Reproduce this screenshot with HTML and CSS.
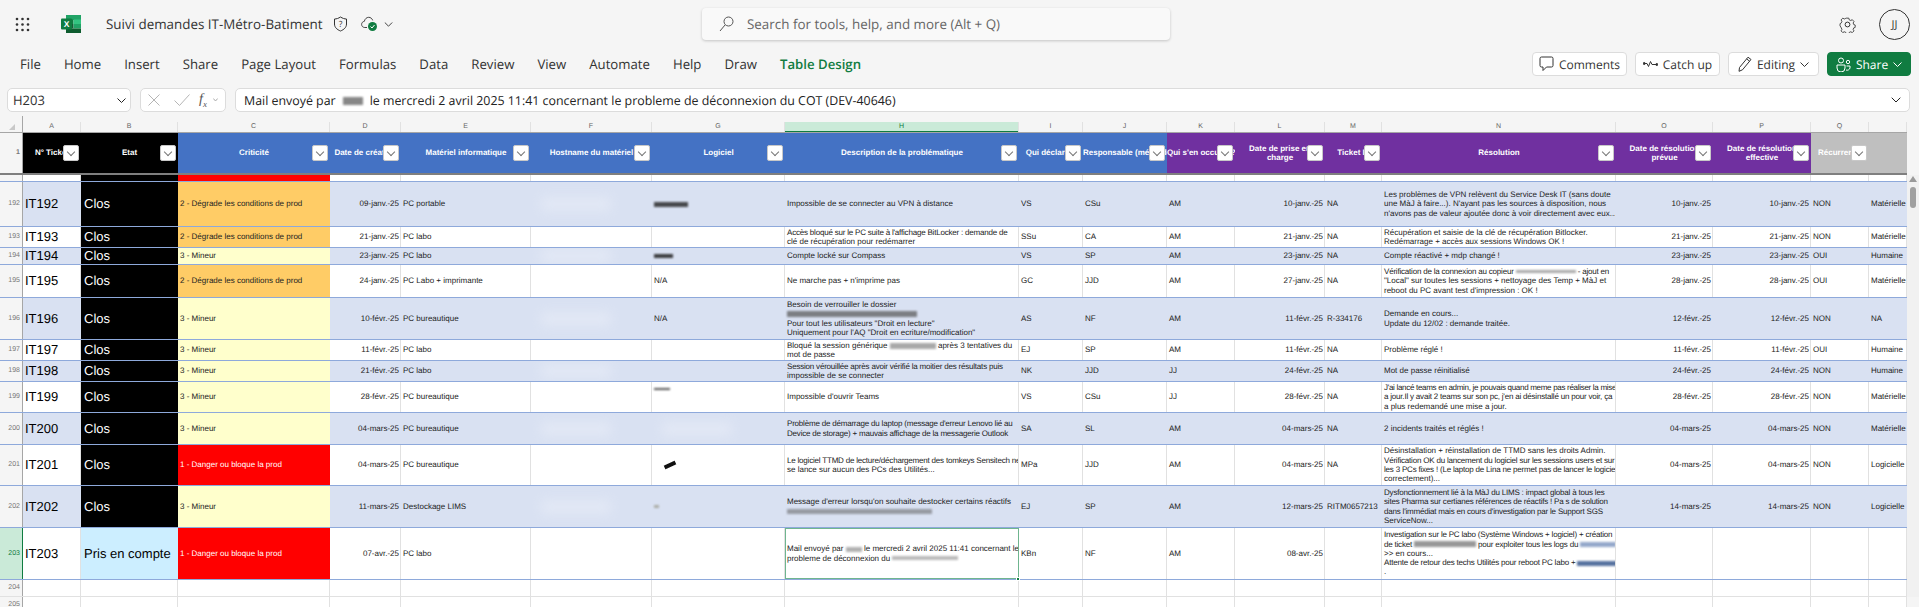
FILE: index.html

```html
<!DOCTYPE html>
<html>
<head>
    <title>Suivi demandes IT-Métro-Batiment</title>
    <meta charset="UTF-8">
    <link rel="stylesheet" href="styles.css">
</head>
<body>
    <header class="topbar">
        <svg class="waffle" width="15" height="15" viewBox="0 0 15 15" fill="#333"><circle cx="2" cy="2" r="1.3"/><circle cx="7.5" cy="2" r="1.3"/><circle cx="13" cy="2" r="1.3"/><circle cx="2" cy="7.5" r="1.3"/><circle cx="7.5" cy="7.5" r="1.3"/><circle cx="13" cy="7.5" r="1.3"/><circle cx="2" cy="13" r="1.3"/><circle cx="7.5" cy="13" r="1.3"/><circle cx="13" cy="13" r="1.3"/></svg>
        <svg class="logo" width="20" height="18" viewBox="0 0 20 18"><rect x="5" width="15" height="5" fill="#21a366"/><rect x="5" y="4.5" width="7.5" height="4.5" fill="#107c41"/><rect x="12.5" y="4.5" width="7.5" height="4.5" fill="#33c481"/><rect x="5" y="9" width="7.5" height="4.5" fill="#185c37"/><rect x="12.5" y="9" width="7.5" height="4.5" fill="#21a366"/><rect x="5" y="13.5" width="15" height="4.5" fill="#0e5c2f"/><rect y="3.5" width="11" height="11" rx="1" fill="#107c41"/><text x="5.5" y="12" font-size="8.5" font-weight="700" fill="#fff" text-anchor="middle" font-family="Liberation Sans">X</text></svg>
        <span class="doc-title">Suivi demandes IT-Métro-Batiment</span>
        <svg class="shield" width="15" height="16" viewBox="0 0 15 16" fill="none" stroke="#333"><path d="M7.5 1c2 1.3 4 2 6 2v5c0 3.5-2.600 5.600-6 7-3.400-1.400-6-3.500-6-7V3c2 0 4-.7 6-2z"/><text x="7.5" y="11" font-size="8.500" fill="#333" stroke="none" text-anchor="middle" font-family="Open Sans">?</text></svg>
        <svg class="cloud" width="17" height="16" viewBox="0 0 17 16" fill="none"><path d="M6 11.500H3.800C1.800 11.500.6 10 .6 8.400c0-1.600 1.200-2.900 2.700-3C3.800 3 5.600 1.300 7.700 1.300c1.900 0 3.500 1.300 4 3.100" stroke="#444"/><circle cx="11.500" cy="10.500" r="4.500" fill="#107c41"/><path d="M9.500 10.500l1.500 1.500 2.500-3" stroke="#fff"/></svg>
        <svg class="chev-small" width="9" height="5" viewBox="0 0 9 5" fill="none" stroke="#444"><path d="M.8.500l3.700 3.700L8.200.500"/></svg>
        <div class="search">
            <svg width="15" height="16" viewBox="0 0 15 16" fill="none" stroke="#555"><circle cx="9.500" cy="5.500" r="4.500"/><path d="M6 9l-5 6"/></svg>
            <span>Search for tools, help, and more (Alt + Q)</span>
        </div>
        <svg class="gear" width="17" height="17" viewBox="0 0 17 17" fill="none" stroke="#333"><circle cx="8.500" cy="8.500" r="2.400"/><path d="M7 1h3l.5 2 1.800.8 1.800-1 2 2.200-1 1.700.7 1.800 1.700.6v2.800l-1.700.6-.7 1.800 1 1.700-2 2-1.800-1-1.800.8-.5 1.700H7l-.5-1.700-1.800-.8-1.800 1-2-2 1-1.700-.7-1.800L-.3 10V7.500l1.500-.9.700-1.800-1-1.700 2-2.100 1.800 1 1.800-.8z" transform="translate(1.300 1.300) scale(.85)"/></svg>
        <div class="avatar">JJ</div>
    </header>

    <nav class="ribbon">
        <a>File</a><a>Home</a><a>Insert</a><a>Share</a><a>Page Layout</a><a>Formulas</a><a>Data</a><a>Review</a><a>View</a><a>Automate</a><a>Help</a><a>Draw</a><a class="tab-active">Table Design</a>
        <div class="actions">
            <button class="btn btn-comments"><svg width="15" height="16" viewBox="0 0 15 16" fill="none" stroke="#333"><path d="M2.500 1h10A1.500 1.500 0 0 1 14 2.500v7a1.500 1.500 0 0 1-1.500 1.500H7.500L4 14.500V11H2.500A1.500 1.500 0 0 1 1 9.500v-7A1.500 1.500 0 0 1 2.500 1z"/></svg>Comments</button>
            <button class="btn btn-catch"><svg width="15" height="8" viewBox="0 0 15 8" fill="none" stroke="#333"><path d="M1 3.500h3l1.500 3 2-5 1.500 3h5"/><circle cx="1.200" cy="3.500" r="1" fill="#333"/><circle cx="13.800" cy="4.500" r="1" fill="#333"/></svg>Catch up</button>
            <button class="btn btn-edit"><svg width="14" height="16" viewBox="0 0 14 16" fill="none" stroke="#333"><path d="M10 1.200l3 2.300-8.500 10.300-3.500 1.500.5-3.800zM8.600 2.900l3 2.300"/></svg>Editing<svg width="9" height="5" viewBox="0 0 9 5" fill="none" stroke="#333"><path d="M.5.500l4 4 4-4"/></svg></button>
            <button class="btn btn-share"><svg width="15" height="15" viewBox="0 0 15 15" fill="none" stroke="#fff"><circle cx="5" cy="3.500" r="2.500"/><circle cx="12" cy="5" r="1.700"/><path d="M1 8h8v3a4 4 0 0 1-8 0zM10.500 9H14v2a3 3 0 0 1-4 2"/></svg>Share<svg width="9" height="5" viewBox="0 0 9 5" fill="none" stroke="#fff"><path d="M.5.500l4 4 4-4"/></svg></button>
        </div>
    </nav>

    <div class="formula-bar">
        <div class="box name-box">H203<svg width="9" height="5" viewBox="0 0 9 5" fill="none" stroke="#222"><path d="M.5.500l4 4 4-4"/></svg></div>
        <div class="box fx-box">
            <svg class="fx-cancel" width="12" height="12" viewBox="0 0 12 12" fill="none" stroke="#b5b5b5"><path d="M.5.500l11 11M11.500.500l-11 11"/></svg>
            <svg width="16" height="12" viewBox="0 0 16 12" fill="none" stroke="#b5b5b5"><path d="M.5 6.500l5 5L15.500.500"/></svg>
            <span class="fx">f<sub>x</sub></span>
            <svg width="5" height="4" viewBox="0 0 5 4" fill="none" stroke="#aaa"><path d="M.3.500L2.500 3 4.700.500"/></svg>
        </div>
        <div class="box formula-input">
            <span>Mail envoyé par<i class="blot blot-name"></i>le mercredi 2 avril 2025 11:41 concernant le probleme de déconnexion du COT (DEV-40646)</span>
            <svg width="10" height="6" viewBox="0 0 10 6" fill="none" stroke="#222"><path d="M.7.700L5 5 9.300.700"/></svg>
        </div>
    </div>

    <div class="workbook">
        <main class="sheet">
            <div class="row col-letters">
                <div class="corner"><span class="corner-mark"></span></div>
                <div>A</div><div>B</div><div>C</div><div>D</div><div>E</div><div>F</div><div>G</div><div class="col-on">H</div><div>I</div><div>J</div><div>K</div><div>L</div><div>M</div><div>N</div><div>O</div><div>P</div><div>Q</div><div></div>
            </div>

            <div class="row head">
                <div class="rn">1</div>
                <div class="th black">N° Ticket<b class="filter"></b></div>
                <div class="th black">Etat<b class="filter"></b></div>
                <div class="th blue">Criticité<b class="filter"></b></div>
                <div class="th blue">Date de création<b class="filter"></b></div>
                <div class="th blue">Matériel informatique<b class="filter"></b></div>
                <div class="th blue">Hostname du matériel<b class="filter"></b></div>
                <div class="th blue">Logiciel<b class="filter"></b></div>
                <div class="th blue">Description de la problématique<b class="filter"></b></div>
                <div class="th blue">Qui déclare ?<b class="filter"></b></div>
                <div class="th blue">Responsable (méthode)<b class="filter"></b></div>
                <div class="th purple">Qui s'en occupe ?<b class="filter"></b></div>
                <div class="th purple"><span>Date de prise en<br>charge</span><b class="filter"></b></div>
                <div class="th purple">Ticket IT<b class="filter"></b></div>
                <div class="th purple">Résolution<b class="filter"></b></div>
                <div class="th purple"><span>Date de résolution<br>prévue</span><b class="filter"></b></div>
                <div class="th purple"><span>Date de résolution<br>effective</span><b class="filter"></b></div>
                <div class="th gray">Récurrence<b class="filter"></b></div>
                <div class="th gray"></div>
            </div>

            <div class="row h7">
                <div class="rn"></div><div></div><div class="etat"></div><div class="crit-red"></div><div></div><div></div><div></div><div></div><div></div><div></div><div></div><div></div><div></div><div></div><div></div><div></div><div></div><div></div><div></div>
            </div>

            <div class="row band h45">
                <div class="rn">192</div><div class="id">IT192</div><div class="etat">Clos</div><div class="crit-orange">2 - Dégrade les conditions de prod</div><div class="num">09-janv.-25</div><div>PC portable</div><div><i class="smudge"></i></div><div class="pad-g"><i class="blot blot-g192"></i></div><div>Impossible de se connecter au VPN à distance</div><div>VS</div><div>CSu</div><div>AM</div><div class="num">10-janv.-25</div><div>NA</div><div><span>Les problèmes de VPN relèvent du Service Desk IT (sans doute<br>une MàJ à faire...). N'ayant pas les sources à disposition, nous<br>n'avons pas de valeur ajoutée donc à voir directement avec eux...</span></div><div class="num">10-janv.-25</div><div class="num">10-janv.-25</div><div>NON</div><div>Matérielle</div>
            </div>
            <div class="row h21">
                <div class="rn">193</div><div class="id">IT193</div><div class="etat">Clos</div><div class="crit-orange">2 - Dégrade les conditions de prod</div><div class="num">21-janv.-25</div><div>PC labo</div><div></div><div class="pad-g"></div><div><span><span class="fit">Accès bloqué sur le PC suite à l'affichage BitLocker : demande de</span><br>clé de récupération pour redémarrer</span></div><div>SSu</div><div>CA</div><div>AM</div><div class="num">21-janv.-25</div><div>NA</div><div><span>Récupération et saisie de la clé de récupération Bitlocker.<br>Redémarrage + accès aux sessions Windows OK !</span></div><div class="num">21-janv.-25</div><div class="num">21-janv.-25</div><div>NON</div><div>Matérielle</div>
            </div>
            <div class="row band h17">
                <div class="rn">194</div><div class="id">IT194</div><div class="etat">Clos</div><div class="crit-yellow">3 - Mineur</div><div class="num">23-janv.-25</div><div>PC labo</div><div><i class="smudge"></i></div><div class="pad-g"><i class="blot blot-g194"></i></div><div>Compte locké sur Compass</div><div>VS</div><div>SP</div><div>AM</div><div class="num">23-janv.-25</div><div>NA</div><div>Compte réactivé + mdp changé !</div><div class="num">23-janv.-25</div><div class="num">23-janv.-25</div><div>OUI</div><div>Humaine</div>
            </div>
            <div class="row h33">
                <div class="rn">195</div><div class="id">IT195</div><div class="etat">Clos</div><div class="crit-orange">2 - Dégrade les conditions de prod</div><div class="num">24-janv.-25</div><div>PC Labo + imprimante</div><div></div><div class="pad-g">N/A</div><div>Ne marche pas + n'imprime pas</div><div>GC</div><div>JJD</div><div>AM</div><div class="num">27-janv.-25</div><div>NA</div><div><span><span class="fit">Vérification de la connexion au copieur <i class="blot blot-n195"></i> - ajout en</span><br>"Local" sur toutes les sessions + nettoyage des Temp + MàJ et<br>reboot du PC avant test d'impression : OK !</span></div><div class="num">28-janv.-25</div><div class="num">28-janv.-25</div><div>OUI</div><div>Matérielle</div>
            </div>
            <div class="row band h42">
                <div class="rn">196</div><div class="id">IT196</div><div class="etat">Clos</div><div class="crit-yellow">3 - Mineur</div><div class="num">10-févr.-25</div><div>PC bureautique</div><div><i class="smudge"></i></div><div class="pad-g">N/A</div><div><span>Besoin de verrouiller le dossier<br><i class="blot blot-h196"></i><br>Pour tout les utilisateurs "Droit en lecture"<br>Uniquement pour l'AQ "Droit en ecriture/modification"</span></div><div>AS</div><div>NF</div><div>AM</div><div class="num">11-févr.-25</div><div>R-334176</div><div><span>Demande en cours...<br>Update du 12/02 : demande traitée.</span></div><div class="num">12-févr.-25</div><div class="num">12-févr.-25</div><div>NON</div><div>NA</div>
            </div>
            <div class="row h21">
                <div class="rn">197</div><div class="id">IT197</div><div class="etat">Clos</div><div class="crit-yellow">3 - Mineur</div><div class="num">11-févr.-25</div><div>PC labo</div><div></div><div class="pad-g"></div><div><span>Bloqué la session générique <i class="blot blot-h197"></i> après 3 tentatives du<br>mot de passe</span></div><div>EJ</div><div>SP</div><div>AM</div><div class="num">11-févr.-25</div><div>NA</div><div>Problème réglé !</div><div class="num">11-févr.-25</div><div class="num">11-févr.-25</div><div>OUI</div><div>Humaine</div>
            </div>
            <div class="row band h21">
                <div class="rn">198</div><div class="id">IT198</div><div class="etat">Clos</div><div class="crit-yellow">3 - Mineur</div><div class="num">21-févr.-25</div><div>PC labo</div><div><i class="smudge"></i></div><div class="pad-g"></div><div><span><span class="fit">Session vérouillée après avoir vérifié la moitier des résultats puis</span><br>impossible de se connecter</span></div><div>NK</div><div>JJD</div><div>JJ</div><div class="num">24-févr.-25</div><div>NA</div><div>Mot de passe réinitialisé</div><div class="num">24-févr.-25</div><div class="num">24-févr.-25</div><div>NON</div><div>Humaine</div>
            </div>
            <div class="row h31">
                <div class="rn">199</div><div class="id">IT199</div><div class="etat">Clos</div><div class="crit-yellow">3 - Mineur</div><div class="num">28-févr.-25</div><div>PC bureautique</div><div></div><div class="pad-g"><i class="blot blot-g199"></i></div><div>Impossible d'ouvrir Teams</div><div>VS</div><div>CSu</div><div>JJ</div><div class="num">28-févr.-25</div><div>NA</div><div><span><span class="fit-more">J'ai lancé teams en admin, je pouvais quand meme pas réaliser la mise</span><br><span class="fit">a jour.Il y avait 2 teams sur son pc, j'en ai désinstallé un pour voir, ça</span><br>a plus redemandé une mise a jour.</span></div><div class="num">28-févr.-25</div><div class="num">28-févr.-25</div><div>NON</div><div>Matérielle</div>
            </div>
            <div class="row band h32">
                <div class="rn">200</div><div class="id">IT200</div><div class="etat">Clos</div><div class="crit-yellow">3 - Mineur</div><div class="num">04-mars-25</div><div>PC bureautique</div><div><i class="smudge"></i></div><div class="pad-g"><i class="smudge"></i></div><div><span><span class="fit">Problème de démarrage du laptop (message d'erreur Lenovo lié au</span><br><span class="fit">Device de storage) + mauvais affichage de la messagerie Outlook</span></span></div><div>SA</div><div>SL</div><div>AM</div><div class="num">04-mars-25</div><div>NA</div><div>2 incidents traités et réglés !</div><div class="num">04-mars-25</div><div class="num">04-mars-25</div><div>NON</div><div>Matérielle</div>
            </div>
            <div class="row h41">
                <div class="rn">201</div><div class="id">IT201</div><div class="etat">Clos</div><div class="crit-red">1 - Danger ou bloque la prod</div><div class="num">04-mars-25</div><div>PC bureautique</div><div></div><div class="pad-g"><i class="blot blot-g201"></i></div><div><span><span class="fit">Le logiciel TTMD de lecture/déchargement des tomkeys Sensitech ne</span><br>se lance sur aucun des PCs des Utilités...</span></div><div>MPa</div><div>JJD</div><div>AM</div><div class="num">04-mars-25</div><div>NA</div><div><span>Désinstallation + réinstallation de TTMD sans les droits Admin.<br><span class="fit">Vérification OK du lancement du logiciel sur les sessions users et sur</span><br><span class="fit">les 3 PCs fixes ! (Le laptop de Lina ne permet pas de lancer le logiciel</span><br>correctement)...</span></div><div class="num">04-mars-25</div><div class="num">04-mars-25</div><div>NON</div><div>Logicielle</div>
            </div>
            <div class="row band h42">
                <div class="rn">202</div><div class="id">IT202</div><div class="etat">Clos</div><div class="crit-yellow">3 - Mineur</div><div class="num">11-mars-25</div><div>Destockage LIMS</div><div><i class="smudge"></i></div><div class="pad-g"><i class="blot blot-g202"></i></div><div><span>Message d'erreur lorsqu'on souhaite destocker certains réactifs<br><i class="blot blot-h202"></i></span></div><div>EJ</div><div>SP</div><div>AM</div><div class="num">12-mars-25</div><div>RITM0657213</div><div><span><span class="fit">Dysfonctionnement lié à la MàJ du LIMS : impact global à tous les</span><br><span class="fit">sites Pharma sur certianes références de réactifs ! Pa s de solution</span><br><span class="fit">dans l'immédiat mais en cours d'investigation par le Support SGS</span><br>ServiceNow...</span></div><div class="num">14-mars-25</div><div class="num">14-mars-25</div><div>NON</div><div>Logicielle</div>
            </div>
            <div class="row h52">
                <div class="rn rn-on">203</div><div class="id">IT203</div><div class="etat-open">Pris en compte</div><div class="crit-red">1 - Danger ou bloque la prod</div><div class="num">07-avr.-25</div><div>PC labo</div><div></div><div class="pad-g"></div><div class="picked"><span>Mail envoyé par <i class="blot blot-h203a"></i> le mercredi 2 avril 2025 11:41 concernant le<br>probleme de déconnexion du <i class="blot blot-h203b"></i></span><b class="handle"></b></div><div>KBn</div><div>NF</div><div>AM</div><div class="num">08-avr.-25</div><div></div><div><span><span class="fit">Investigation sur le PC labo (Système Windows + logiciel) + création</span><br><span class="fit">de ticket <i class="blot blot-n203a"></i> pour exploiter tous les logs du <i class="blot blot-n203b"></i></span><br>&gt;&gt; en cours...<br><span class="fit">Attente de retour des techs Utilités pour reboot PC labo + <i class="blot blot-n203c"></i></span><br>.</span></div><div></div><div></div><div></div><div></div>
            </div>
            <div class="row empty h17">
                <div class="rn">204</div><div></div><div></div><div></div><div></div><div></div><div></div><div></div><div></div><div></div><div></div><div></div><div></div><div></div><div></div><div></div><div></div><div></div><div></div>
            </div>
            <div class="row empty h17">
                <div class="rn">205</div><div></div><div></div><div></div><div></div><div></div><div></div><div></div><div></div><div></div><div></div><div></div><div></div><div></div><div></div><div></div><div></div><div></div><div></div>
            </div>
        </main>

        <aside class="scrollbar">
            <span class="scroll-up"></span>
            <span class="scroll-thumb"></span>
        </aside>
    </div>
</body>
</html>
```

FILE: styles.css

```css
* {
    box-sizing: border-box;
}
html, body {
    height: 100%;
    margin: 0;
    overflow: hidden;
}
body {
    background-color: #f5f5f5;
    color: #333;
    font-family: "Open Sans", sans-serif;
    font-size: 14px;
    text-rendering: geometricPrecision;
}

/* top bar */
.topbar {
    display: flex;
    align-items: center;
    height: 48px;
    padding-left: 15px;
}
.logo {
    margin-left: 31px;
}
.doc-title {
    margin-left: 25px;
    width: 227px;
    font-size: 13.4px;
    white-space: nowrap;
}
.cloud {
    margin-left: 13px;
}
.chev-small {
    margin-left: 6px;
}
.search {
    display: flex;
    align-items: center;
    gap: 13px;
    width: 468px;
    height: 32px;
    margin-left: 309px;
    padding-left: 17px;
    background-color: #f9f9f9;
    border-radius: 4px;
    box-shadow: 0 1px 3px rgba(0, 0, 0, 0.2);
    color: #666;
    font-size: 13.4px;
}
.gear {
    margin-left: auto;
}
.avatar {
    display: flex;
    align-items: center;
    justify-content: center;
    width: 31px;
    height: 31px;
    margin: 0 9px 0 23px;
    border: 1px solid #333;
    border-radius: 50%;
    font-size: 11px;
}

/* ribbon */
.ribbon {
    display: flex;
    align-items: center;
    gap: 23px;
    height: 40px;
    padding-left: 20px;
    padding-bottom: 8px;
    font-size: 13.2px;
}
.tab-active {
    color: #107c41;
    font-weight: 600;
}
.actions {
    display: flex;
    gap: 8px;
    margin-left: auto;
    margin-right: 8px;
}
.btn {
    display: flex;
    align-items: center;
    justify-content: center;
    gap: 5px;
    height: 24px;
    padding: 0;
    background-color: #fff;
    border: 1px solid #dcdcdc;
    border-radius: 4px;
    color: #333;
    font-family: "Open Sans", sans-serif;
    font-size: 12px;
    text-rendering: geometricPrecision;
}
.btn-comments {
    width: 95px;
}
.btn-catch {
    width: 85px;
}
.btn-edit {
    width: 91px;
}
.btn-share {
    width: 84px;
    background-color: #107c41;
    border-color: #107c41;
    color: #fff;
}

/* formula bar */
.formula-bar {
    display: flex;
    gap: 9px;
    height: 24px;
    padding: 0 9px 0 7px;
}
.box {
    display: flex;
    align-items: center;
    background-color: #fff;
    border: 1px solid #dcdcdc;
    border-radius: 5px;
}
.name-box {
    justify-content: space-between;
    width: 124px;
    padding: 0 4px 0 5px;
    font-size: 13px;
}
.fx-box {
    gap: 9px;
    width: 86px;
    padding-left: 7px;
}
.fx-cancel {
    margin-right: 5px;
}
.fx {
    color: #555;
    font-family: "Liberation Serif", serif;
    font-style: italic;
    font-size: 14px;
    margin-right: -3px;
}
.fx sub {
    font-size: 9px;
}
.formula-input {
    flex: 1;
    justify-content: space-between;
    padding: 0 8px;
    font-size: 12.4px;
    color: #222;
}

/* sheet */
.workbook {
    display: flex;
    margin-top: 10px;
}
.sheet {
    width: 1907px;
}
.row {
    display: grid;
    grid-template-columns: 23px 58px 97px 152px 71px 130px 121px 133px 234px 64px 84px 68px 90px 57px 234px 97px 98px 58px 38px;
    background-color: #fff;
    border-bottom: 1px solid #8ea9db;
    color: #222;
    font-family: "Liberation Sans", sans-serif;
    font-size: 8px;
    line-height: 9.3px;
}
.row > div {
    display: flex;
    align-items: center;
    min-width: 0;
    padding: 0 1px 0 2px;
    overflow: hidden;
    white-space: nowrap;
    border-right: 1px solid #e1e1e1;
}
.row > div > * {
    flex: none;
}
.row > .num {
    justify-content: flex-end;
}
/* lignes longues que le tableur resserre pour tenir dans la colonne */
.fit {
    letter-spacing: -0.2px;
}
.fit-more {
    letter-spacing: -0.3px;
}
.h7 { height: 7px; }
.h17 { height: 17px; }
.h21 { height: 21px; }
.h31 { height: 31px; }
.h32 { height: 32px; }
.h33 { height: 33px; }
.h41 { height: 41px; }
.h42 { height: 42px; }
.h45 { height: 45px; }
.h52 { height: 52px; }

.band {
    background-color: #d9e1f2;
}
.band > div {
    border-right-color: transparent;
}
.empty {
    border-bottom-color: #e1e1e1;
}

.col-letters {
    height: 11px;
    background-color: #f5f5f5;
    border-bottom: 1px solid #a6a6a6;
    color: #666;
    font-size: 7px;
}
.col-letters > div {
    justify-content: center;
    padding: 0;
}
.row > .corner {
    position: relative;
    overflow: visible;
    border-right-color: #a6a6a6;
}
.corner::before {
    content: "";
    position: absolute;
    right: -1px;
    top: -6px;
    width: 1px;
    height: 6px;
    background-color: #a6a6a6;
}
.corner-mark {
    width: 0;
    height: 0;
    margin-left: 2px;
    border-left: 6px solid transparent;
    border-bottom: 6px solid #c8c8c8;
}
.col-on {
    background-color: #caead8;
    color: #107c41;
    box-shadow: inset 0 -1px 0 #107c41;
}

.head {
    height: 42px;
    border-bottom: 2px solid #7f7f7f;
    color: #fff;
    font-weight: 700;
}
.row > .th {
    position: relative;
    justify-content: safe center;
    padding: 0;
    text-align: center;
    border-right: 0;
}
.black { background-color: #000; }
.blue { background-color: #4472c4; }
.purple { background-color: #7030a0; }
.gray { background-color: #bfbfbf; }
.filter {
    position: absolute;
    right: 2px;
    top: 12px;
    width: 16px;
    height: 16px;
    background-color: #fff;
    border: 1px solid #c8c8c8;
    border-radius: 2px;
}
.filter::after {
    content: "";
    position: absolute;
    left: 4px;
    top: 3px;
    width: 5px;
    height: 5px;
    border-right: 1px solid #777;
    border-bottom: 1px solid #777;
    transform: rotate(45deg);
}

.row > .rn {
    justify-content: flex-end;
    padding: 0 2px 0 0;
    background-color: #f5f5f5;
    border-right: 1px solid #a6a6a6;
    color: #777;
    font-size: 7px;
}
.row > .rn-on {
    background-color: #caead8;
    border-right-color: #107c41;
    color: #107c41;
}

.row > .id {
    color: #000;
    font-size: 13px;
}
.row > .etat,
.row > .etat-open {
    padding-left: 3px;
    font-size: 13px;
    border-right: 0;
}
.row > .etat {
    background-color: #000;
    color: #fff;
}
.row > .etat-open {
    background-color: #cceeff;
    color: #000;
}
.row > .crit-orange,
.row > .crit-yellow,
.row > .crit-red {
    border-right: 0;
}
.crit-orange { background-color: #ffcc66; }
.crit-yellow { background-color: #ffffcc; }
.crit-red {
    background-color: #f00;
    color: #fff;
}

.row > .picked {
    position: relative;
    outline: 1px solid #6fb58f;
    outline-offset: -1px;
    overflow: visible;
}
.handle {
    position: absolute;
    right: -2px;
    bottom: -2px;
    width: 4px;
    height: 4px;
    background-color: #107c41;
    border: 1px solid #fff;
}
.pad-g {
    padding-left: 2.5px;
}

/* traces floues */
.blot {
    display: inline-block;
    height: 6px;
    vertical-align: middle;
    background-color: #555;
    filter: blur(1.2px);
    opacity: 0.7;
}
.smudge {
    display: block;
    width: 70px;
    height: 14px;
    margin-left: 8px;
    background-color: #fff;
    filter: blur(6px);
    opacity: 0.25;
}
.blot-name {
    width: 20px;
    height: 8px;
    margin: 0 7px;
}
.blot-g192 {
    width: 34px;
    height: 5px;
    background-color: #222;
    opacity: 0.8;
}
.blot-g194 {
    width: 19px;
    height: 4px;
    background-color: #222;
    opacity: 0.85;
}
.blot-g199 {
    width: 16px;
    height: 2px;
    margin-bottom: 17px;
    background-color: #111;
}
.blot-g201 {
    width: 12px;
    height: 4px;
    margin: 0 0 0 10px;
    background-color: #111;
    transform: rotate(-25deg);
    filter: blur(0.6px);
    opacity: 1;
}
.blot-g202 {
    width: 5px;
    height: 3px;
    background-color: #998;
}
.blot-n195 {
    width: 60px;
    height: 3px;
    opacity: 0.5;
}
.blot-h196 {
    width: 130px;
    height: 6px;
}
.blot-h197 {
    width: 46px;
    height: 6px;
    opacity: 0.5;
}
.blot-h202 {
    width: 145px;
    height: 5px;
    opacity: 0.5;
}
.blot-h203a {
    width: 16px;
    height: 5px;
    opacity: 0.45;
}
.blot-h203b {
    width: 66px;
    height: 4px;
    opacity: 0.4;
}
.blot-n203a {
    width: 62px;
    height: 6px;
    opacity: 0.6;
}
.blot-n203b {
    width: 36px;
    height: 5px;
    background-color: #4d6fa8;
    opacity: 0.6;
}
.blot-n203c {
    width: 42px;
    height: 5px;
    background-color: #2d4f88;
    opacity: 0.8;
}

/* scrollbar */
.scrollbar {
    display: flex;
    flex-direction: column;
    align-items: center;
    width: 12px;
    height: 475px;
    padding-top: 54px;
    background: linear-gradient(#f5f5f5 53px, #f1f1f1 53px);
}
.scroll-up {
    width: 0;
    height: 0;
    border-left: 4px solid transparent;
    border-right: 4px solid transparent;
    border-bottom: 6px solid #9a9a9a;
}
.scroll-thumb {
    width: 6px;
    height: 21px;
    margin-top: 5px;
    background-color: #a0a0a0;
    border-radius: 3px;
}
```
